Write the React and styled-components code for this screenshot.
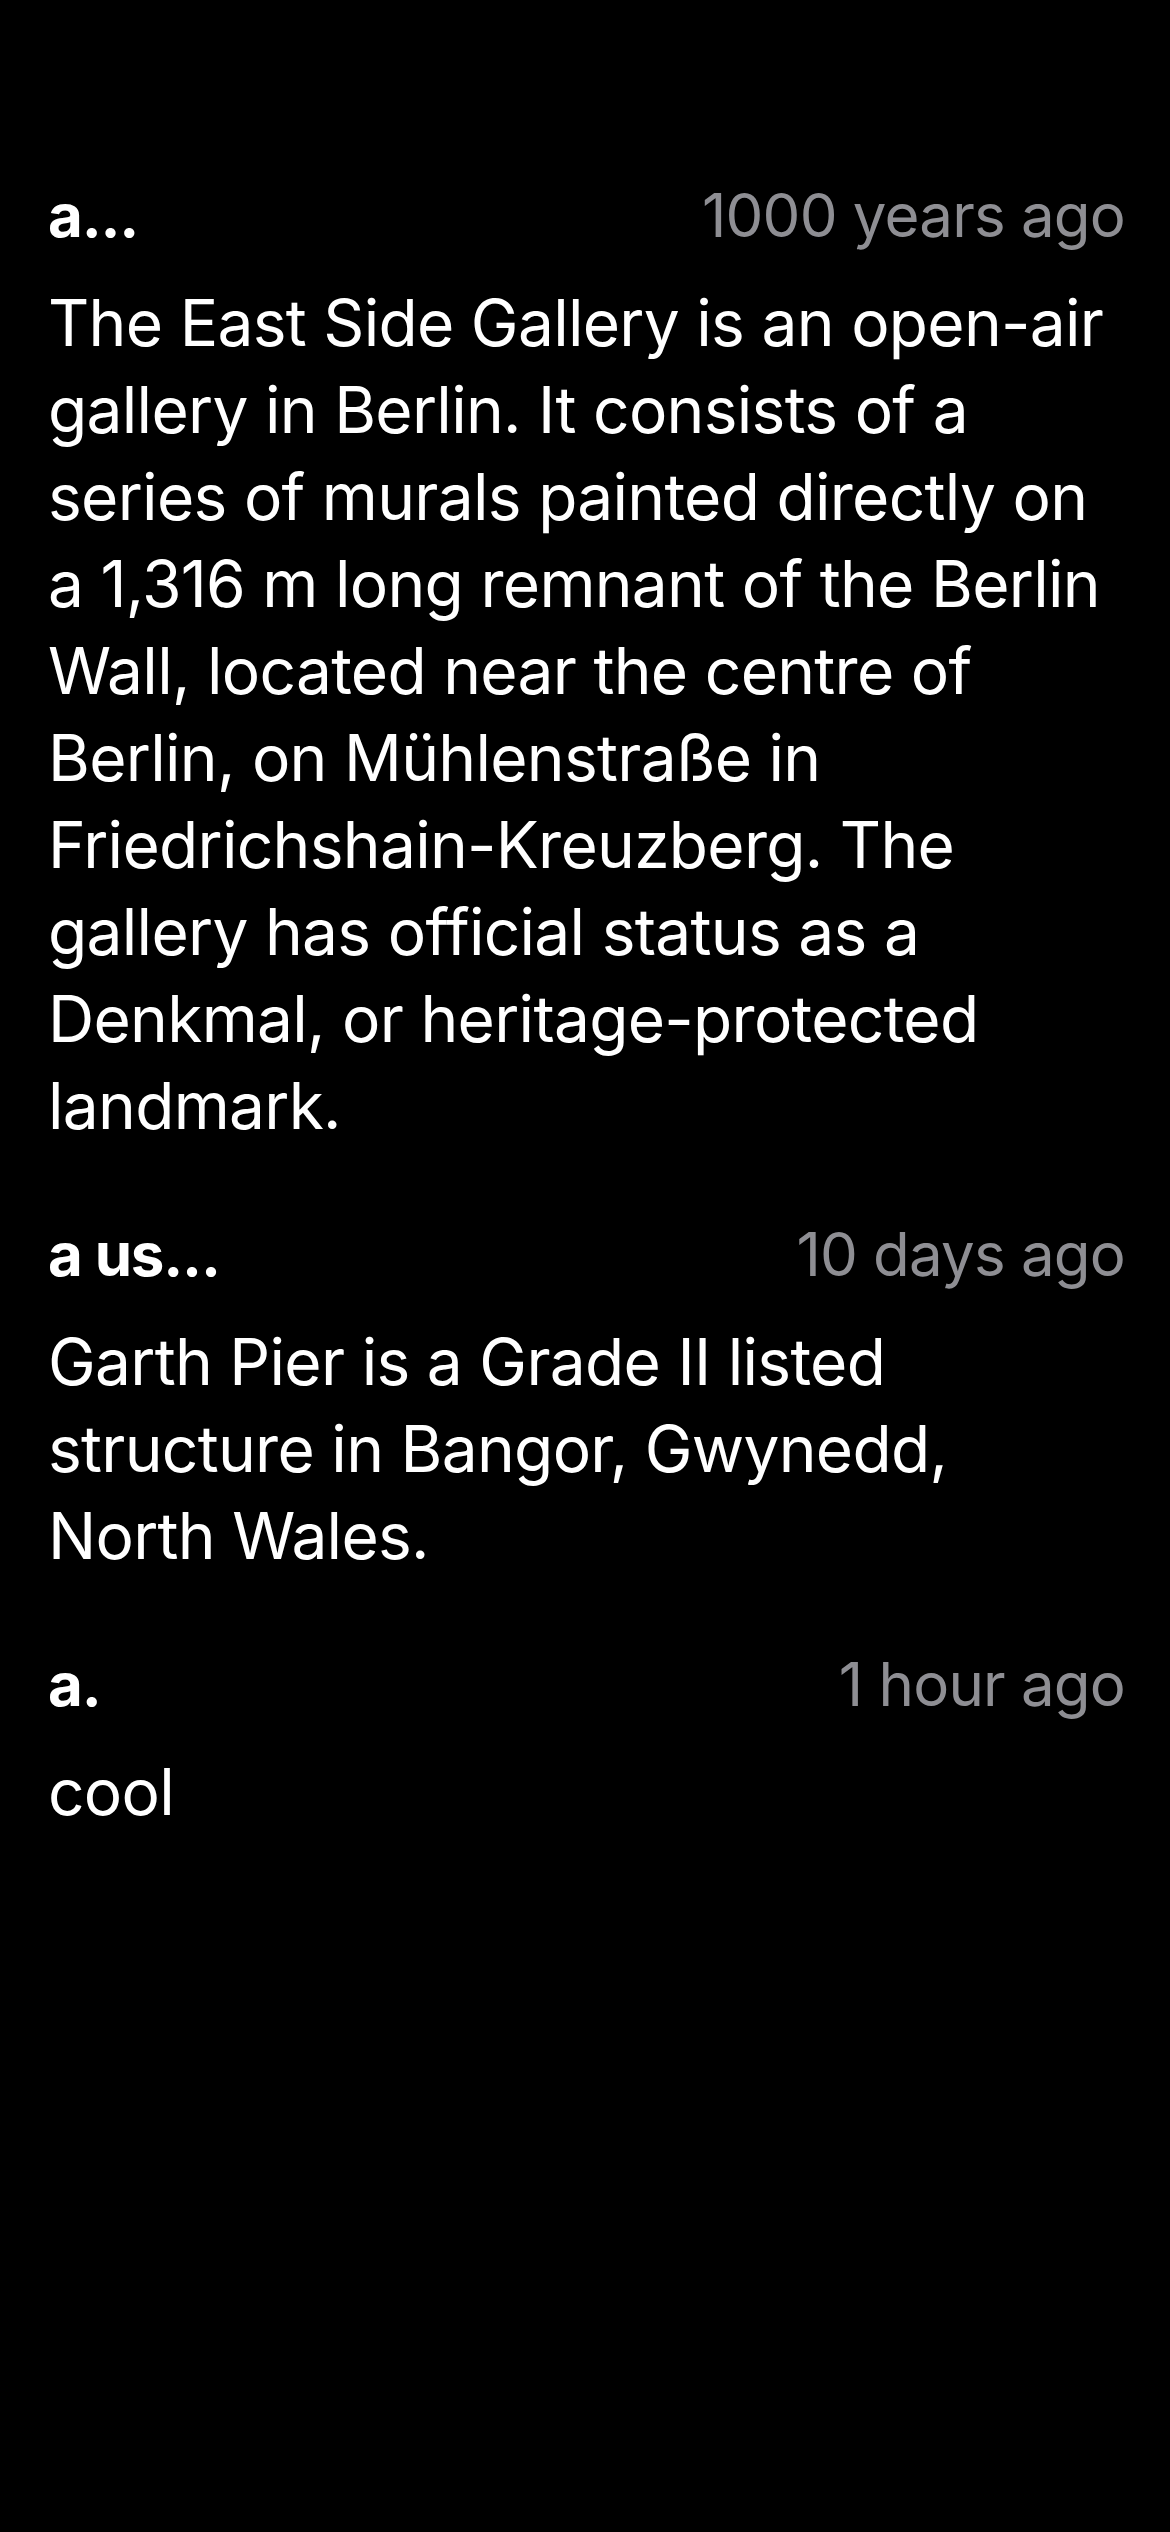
import React from "react";
import styled, { createGlobalStyle } from "styled-components";

const Global = createGlobalStyle`
  html, body { margin: 0; padding: 0; background: #000; }
  body { font-family: Inter, "Noto Sans", "Liberation Sans", sans-serif; -webkit-font-smoothing: antialiased; }
`;

const Page = styled.div`
  min-height: 2532px;
  background: #000;
  box-sizing: border-box;
  padding: 172px 45px 0 48px;
  display: flex;
  flex-direction: column;
  gap: 62px;
`;

const Comment = styled.div`
  display: flex;
  flex-direction: column;
  gap: 20px;
`;

const Header = styled.div`
  display: flex;
  justify-content: space-between;
  align-items: baseline;
  line-height: 87px;
  font-size: 60px;
  letter-spacing: -0.8px;
`;

const Name = styled.span`
  color: #fff;
  font-weight: 700;
  letter-spacing: -1.2px;
`;

const Time = styled.span`
  color: #8e8e93;
  font-weight: 400;
`;

const Body = styled.p`
  margin: 0;
  color: #fff;
  font-size: 64px;
  line-height: 87px;
  letter-spacing: -0.7px;
  font-weight: 400;
`;

const comments = [
  {
    name: "a...",
    time: "1000 years ago",
    text: "The East Side Gallery is an open-air gallery in Berlin. It consists of a series of murals painted directly on a 1,316 m long remnant of the Berlin Wall, located near the centre of Berlin, on Mühlenstraße in Friedrichshain-Kreuzberg. The gallery has official status as a Denkmal, or heritage-protected landmark.",
  },
  {
    name: "a us...",
    time: "10 days ago",
    text: "Garth Pier is a Grade II listed structure in Bangor, Gwynedd, North Wales.",
  },
  { name: "a.", time: "1 hour ago", text: "cool" },
];

export default function App() {
  return (
    <>
      <Global />
      <Page>
        {comments.map((c, i) => (
          <Comment key={i}>
            <Header>
              <Name>{c.name}</Name>
              <Time>{c.time}</Time>
            </Header>
            <Body>{c.text}</Body>
          </Comment>
        ))}
      </Page>
    </>
  );
}
